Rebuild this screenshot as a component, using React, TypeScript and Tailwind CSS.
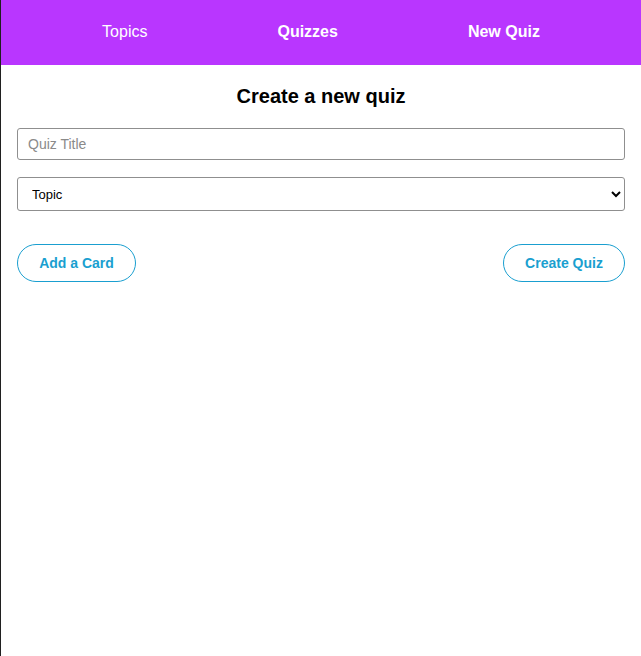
import React from "react";

export default function App() {
  return (
    <div className="min-h-[656px] border-l border-[#202020] bg-white" style={{ fontFamily: '"Liberation Sans", Arial, sans-serif' }}>
      <nav className="h-[65px] bg-[#b936ff] flex items-center justify-center gap-[130px] pb-[2px] text-white text-[16px]">
        <a className="font-normal">Topics</a>
        <a className="font-bold">Quizzes</a>
        <a className="font-bold">New Quiz</a>
      </nav>
      <section className="px-4">
        <h1 className="text-center text-[20px] font-bold text-black mt-[19px] leading-[24px]">Create a new quiz</h1>
        <form className="mt-[20px] flex flex-col">
          <input
            placeholder="Quiz Title"
            className="h-[32px] w-full rounded-[3px] border border-[#8f8f8f] px-[10px] text-[14px] placeholder:text-[#8a8a8a] outline-none"
          />
          <select className="mt-[17px] h-[34px] w-full rounded-[3px] border border-[#8f8f8f] px-[10px] text-[13px] text-black bg-white">
            <option>Topic</option>
          </select>
          <div className="mt-[33px] flex justify-between">
            <button type="button" className="h-[38px] w-[119px] rounded-full border border-[#1a9fd0] text-[#1a9fd0] font-bold text-[14px]">Add a Card</button>
            <button type="button" className="h-[38px] w-[122px] rounded-full border border-[#1a9fd0] text-[#1a9fd0] font-bold text-[14px]">Create Quiz</button>
          </div>
        </form>
      </section>
    </div>
  );
}
